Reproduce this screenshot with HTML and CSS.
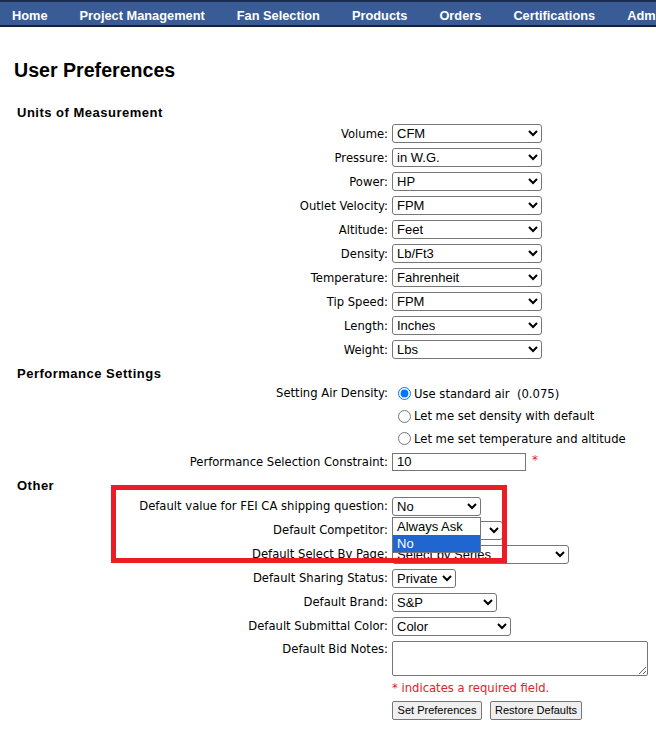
FILE: index.html
```html
<!DOCTYPE html>
<html lang="en">
<head>
  <meta charset="UTF-8">
  <title>User Preferences</title>
  <link rel="stylesheet" href="styles.css">
</head>
<body>
<nav class="topnav">
  <a href="#">Home</a>
  <a href="#">Project Management</a>
  <a href="#">Fan Selection</a>
  <a href="#">Products</a>
  <a href="#">Orders</a>
  <a href="#">Certifications</a>
  <a href="#">Administration</a>
</nav>
<div class="page">
  <h1>User Preferences</h1>
  <form class="prefs">
    <!-- Units -->
    <div class="section">Units of Measurement</div>
    <label>Volume:</label><select class="unit"><option>CFM</option></select>
    <label>Pressure:</label><select class="unit"><option>in W.G.</option></select>
    <label>Power:</label><select class="unit"><option>HP</option></select>
    <label>Outlet Velocity:</label><select class="unit"><option>FPM</option></select>
    <label>Altitude:</label><select class="unit"><option>Feet</option></select>
    <label>Density:</label><select class="unit"><option>Lb/Ft3</option></select>
    <label>Temperature:</label><select class="unit"><option>Fahrenheit</option></select>
    <label>Tip Speed:</label><select class="unit"><option>FPM</option></select>
    <label>Length:</label><select class="unit"><option>Inches</option></select>
    <label>Weight:</label><select class="unit"><option>Lbs</option></select>

    <!-- Performance -->
    <div class="section">Performance Settings</div>
    <label class="top radio-label">Setting Air Density:</label>
    <div class="choices">
      <label class="choice"><input type="radio" name="density" checked>Use standard air&nbsp; (0.075)</label>
      <label class="choice"><input type="radio" name="density">Let me set density with default</label>
      <label class="choice"><input type="radio" name="density">Let me set temperature and altitude</label>
    </div>
    <label>Performance Selection Constraint:</label>
    <div class="constraint">
      <input type="text" class="num" value="10">
      <span class="req">*</span>
    </div>

    <!-- Other -->
    <div class="section">Other</div>
    <label>Default value for FEI CA shipping question:</label>
    <div class="dropdown">
      <select class="fei"><option>No</option></select>
      <div class="popup">
        <div class="opt">Always Ask</div>
        <div class="opt selected">No</div>
      </div>
    </div>
    <label>Default Competitor:</label><select class="competitor"><option>None</option></select>
    <label>Default Select By Page:</label><select class="bypage"><option>Select by Series</option></select>
    <label>Default Sharing Status:</label><select class="sharing"><option>Private</option></select>
    <label>Default Brand:</label><select class="brand"><option>S&amp;P</option></select>
    <label>Default Submittal Color:</label><select class="color"><option>Color</option></select>
    <label class="top">Default Bid Notes:</label><textarea class="notes"></textarea>

    <div class="note">* indicates a required field.</div>
    <div class="actions">
      <button type="button" class="set">Set Preferences</button>
      <button type="button" class="restore">Restore Defaults</button>
    </div>
  </form>
</div>
<div class="highlight"></div>
</body>
</html>
```

FILE: styles.css
```css
body {
  margin: 0;
  font-family: "DejaVu Sans", Verdana, sans-serif;
  font-size: 11.6px;
  color: #000;
  background: #fff;
}
.topnav {
  display: flex;
  align-items: center;
  gap: 32px;
  height: 20px;
  padding: 3px 0 0 12px;
  box-sizing: content-box;
  background: #3a5c96;
  border-top: 2px solid #1b2d4f;
  border-bottom: 2px solid #16213a;
  white-space: nowrap;
  overflow: hidden;
}
.topnav a {
  color: #fff;
  font: bold 12.8px "Liberation Sans", Arial, sans-serif;
  text-decoration: none;
}
.page {
  padding: 0 14px;
}
h1 {
  font: bold 19.6px/24px "Liberation Sans", Arial, sans-serif;
  margin: 31px 0 21px;
}
.prefs {
  display: grid;
  grid-template-columns: 374px auto;
  column-gap: 4px;
  row-gap: 5px;
  align-items: center;
  justify-items: start;
}
.prefs > label {
  justify-self: end;
  line-height: 16px;
}
.prefs > label.top { align-self: start; }
.prefs > label.radio-label { line-height: 17.5px; }
.section {
  grid-column: 1 / -1;
  font: bold 13px/16px "Liberation Sans", Arial, sans-serif;
  letter-spacing: 0.5px;
  padding: 2px 0 0 3px;
  margin-bottom: -2px;
}
select, input[type="text"], textarea {
  font: 13px "Liberation Sans", Arial, sans-serif;
  color: #000;
  box-sizing: border-box;
  margin: 0;
}
select {
  height: 19px;
  padding: 0;
  border: 1px solid #767676;
  border-radius: 3px;
  background: #fff;
}
.unit { width: 150px; }
.fei { width: 89px; }
.competitor { width: 111px; }
.bypage { width: 177px; }
.sharing { width: 64px; }
.brand { width: 105px; }
.color { width: 119px; }
.choices {
  display: flex;
  flex-direction: column;
  gap: 5px;
}
.choice {
  display: flex;
  align-items: center;
  height: 17.5px;
  white-space: pre;
}
.choice input {
  width: 13px;
  height: 13px;
  margin: 0 3px 0 6px;
}
.constraint {
  display: flex;
  align-items: flex-start;
  gap: 6px;
}
.num {
  width: 134px;
  height: 18px;
  padding: 0 4px;
  border: 1px solid #767676;
}
.req {
  color: #e8202a;
  font-size: 12px;
  line-height: 12px;
  margin-top: 1px;
}
.dropdown {
  position: relative;
  display: flex;
}
.popup {
  position: absolute;
  top: 20px;
  left: 0;
  width: 89px;
  background: #fff;
  border: 1px solid #767676;
  box-sizing: border-box;
  font: 13px "Liberation Sans", Arial, sans-serif;
  z-index: 2;
}
.opt {
  height: 17px;
  line-height: 17px;
  padding-left: 4px;
}
.opt.selected {
  background: #1f66d1;
  color: #fff;
}
.notes {
  width: 256px;
  height: 35px;
  border: 1px solid #767676;
  border-radius: 2px;
  resize: both;
}
.note, .actions { grid-column: 2; }
.note {
  color: #e8202a;
  line-height: 15px;
}
.actions {
  display: flex;
  gap: 8px;
}
button {
  height: 19px;
  padding: 0;
  font: 11px "Liberation Sans", Arial, sans-serif;
  color: #000;
  background: #efefef;
  border: 1px solid #767676;
  border-radius: 2px;
}
.set { width: 90px; }
.restore { width: 92px; }
.highlight {
  position: absolute;
  left: 111px;
  top: 485px;
  width: 396px;
  height: 78px;
  border: 5px solid #ec1c24;
  box-sizing: border-box;
  pointer-events: none;
  z-index: 3;
}
```
